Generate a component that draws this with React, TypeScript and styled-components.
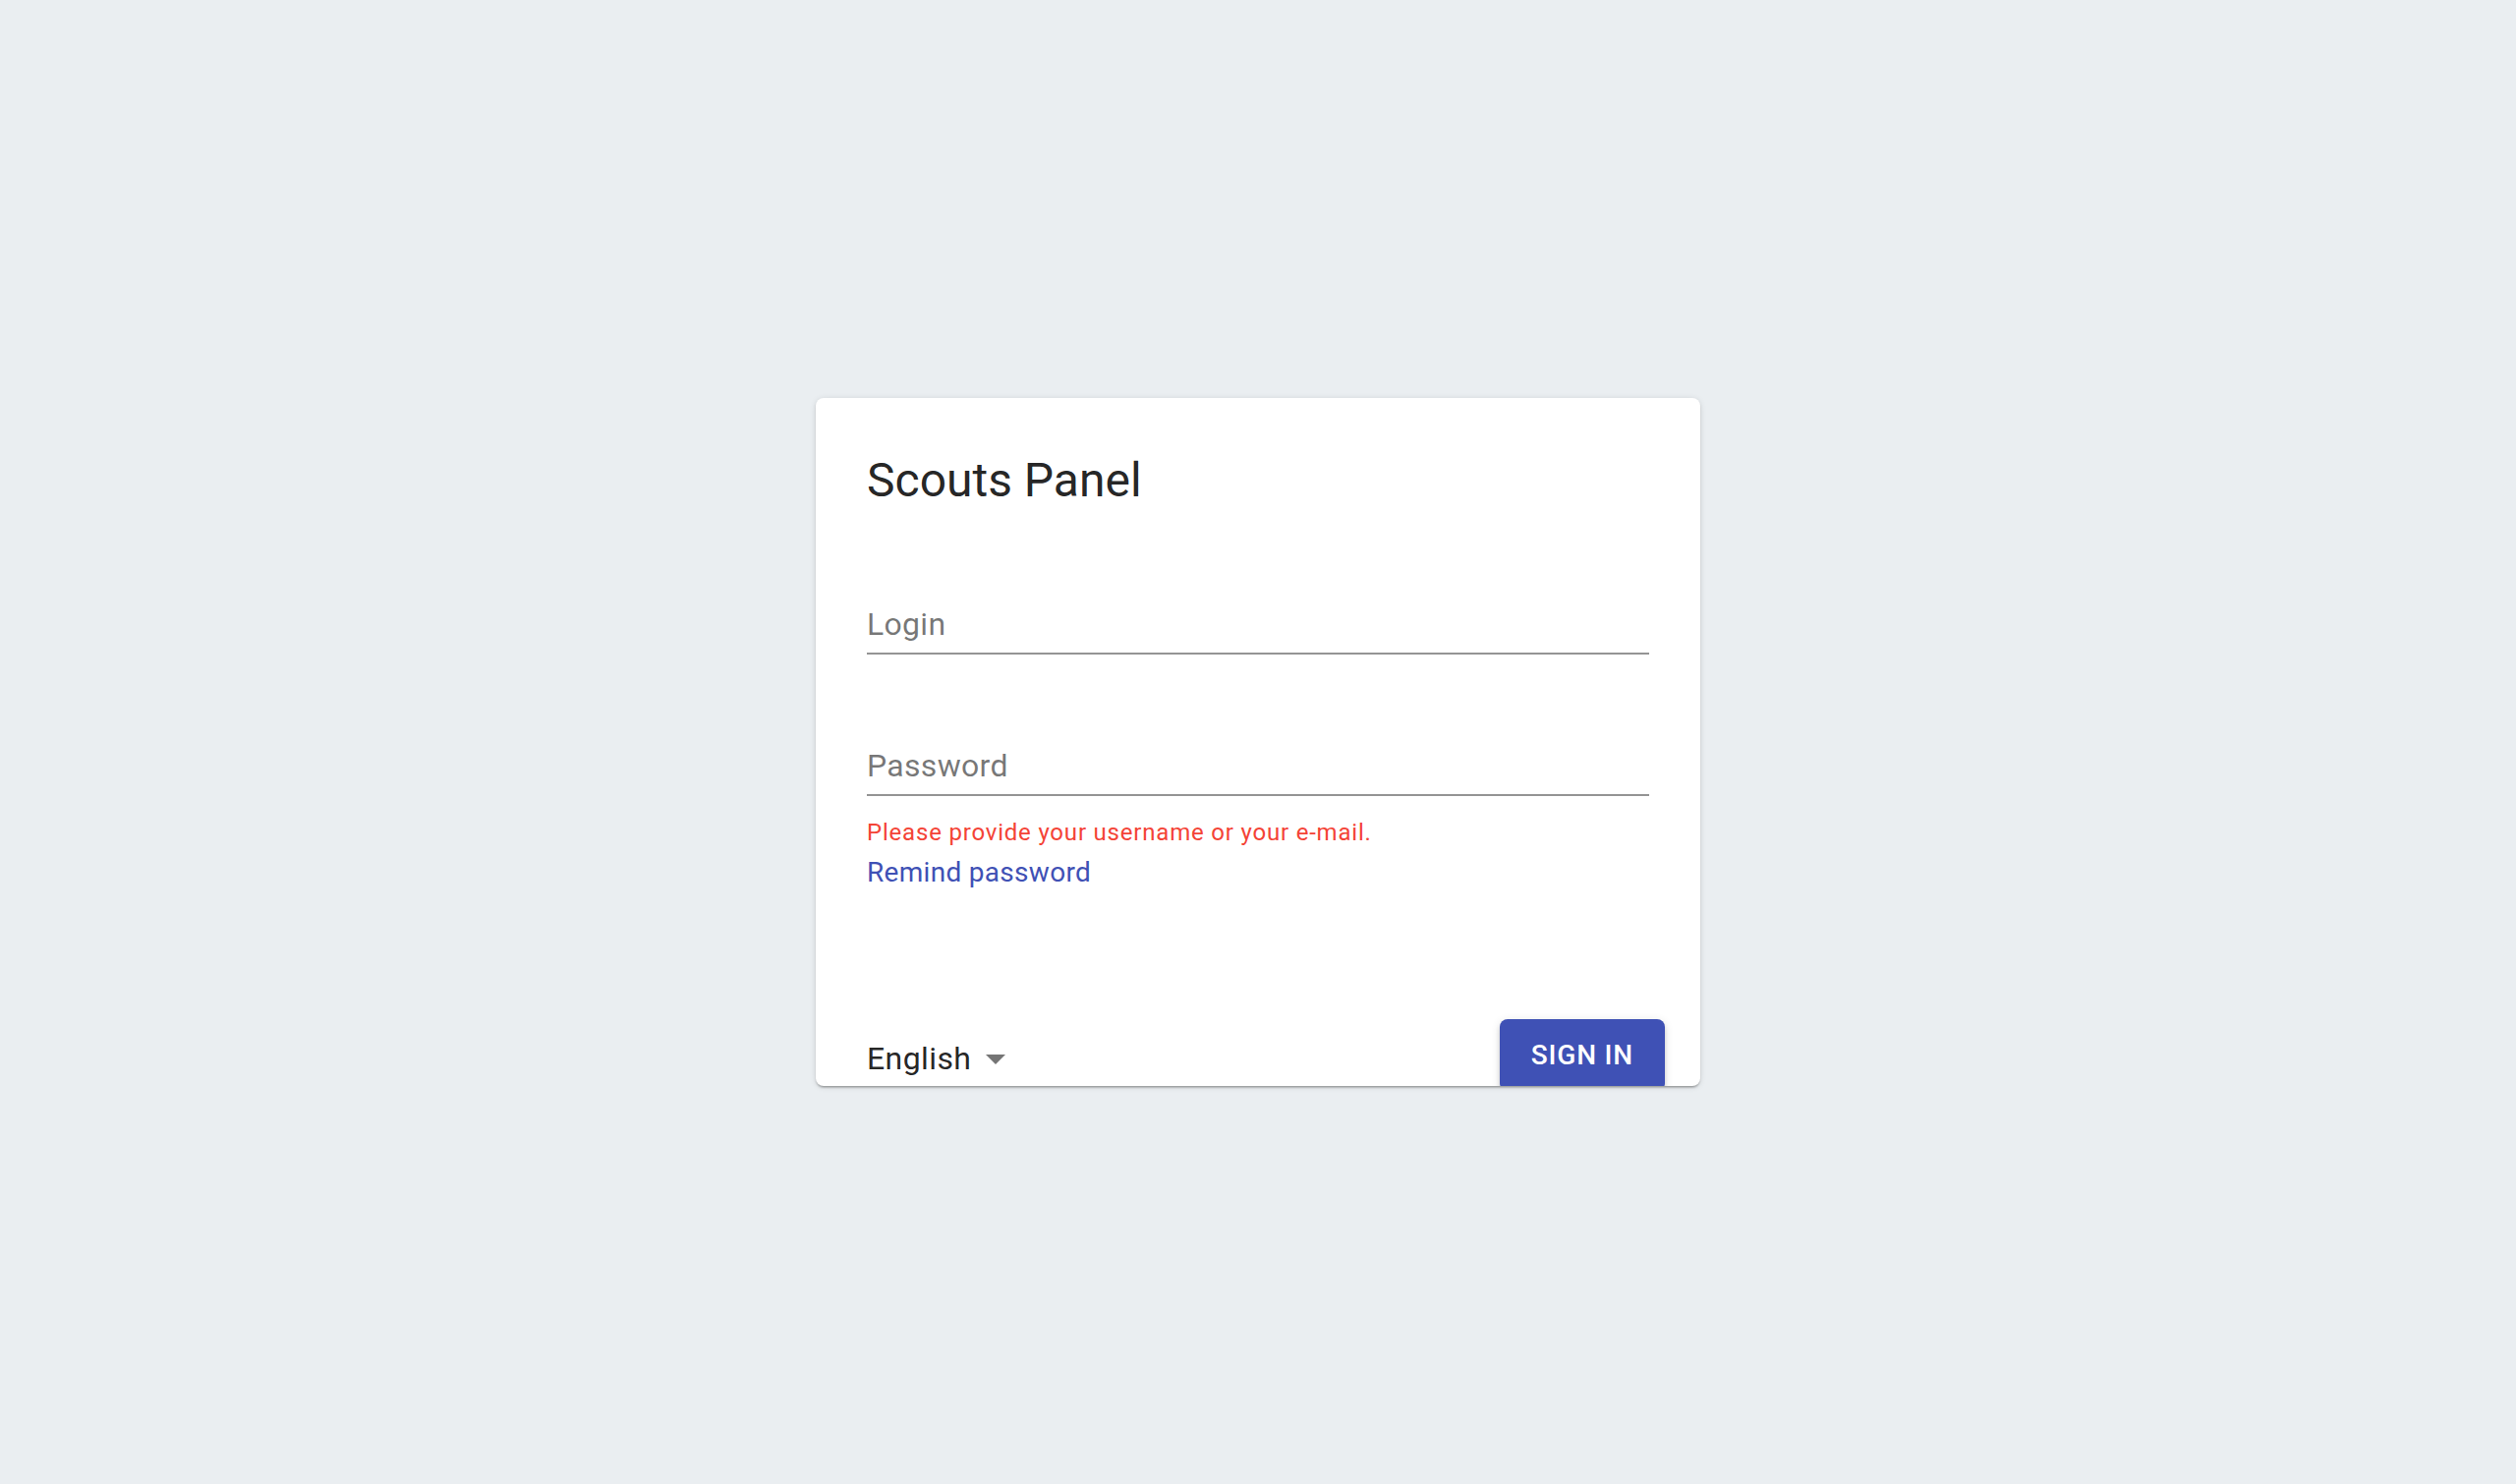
import styled, {createGlobalStyle} from 'styled-components'

const GlobalStyle = createGlobalStyle`
    html, body {
        margin: 0;
        padding: 0;
        background-color: #eaeef1;
        font-family: Roboto, 'Noto Sans', sans-serif;
    }
`
const Page = styled.div`
    height: 100vh;
    display: flex;
    align-items: center;
    justify-content: center;
`
const Card = styled.form`
    box-sizing: border-box;
    width: 900px;
    height: 700px;
    padding: 52px 52px 0;
    background-color: #ffffff;
    border-radius: 8px;
    overflow: hidden;
    display: flex;
    flex-direction: column;
    box-shadow: 0 3px 2px -2px rgba(0, 0, 0, .2), 0 2px 2px 0 rgba(0, 0, 0, .14), 0 1px 6px 0 rgba(0, 0, 0, .12);
`
const Title = styled.h1`
    margin: 0;
    font-size: 48px;
    line-height: 64px;
    font-weight: 400;
    color: rgba(0, 0, 0, .87);
`
const Field = styled.div<{$gap: number}>`
    margin-top: ${p => p.$gap}px;
    border-bottom: 2px solid rgba(0, 0, 0, .42);
`
const Input = styled.input`
    box-sizing: content-box;
    display: block;
    width: 100%;
    height: 38px;
    padding: 8px 0 10px;
    border: none;
    outline: none;
    background: transparent;
    font-family: inherit;
    font-size: 32px;
    line-height: 38px;
    letter-spacing: .3px;
    color: rgba(0, 0, 0, .87);
    &::placeholder {
        color: rgba(0, 0, 0, .54);
        opacity: 1;
    }
`
const Error = styled.p`
    margin: 21px 0 0;
    font-size: 24px;
    line-height: 32px;
    letter-spacing: .8px;
    color: #f44336;
`
const Link = styled.a`
    margin-top: 7px;
    align-self: flex-start;
    font-size: 28px;
    line-height: 36px;
    letter-spacing: .3px;
    color: #3f51b5;
    text-decoration: none;
`
const Footer = styled.div`
    margin: 131px -16px 0 0;
    display: flex;
    justify-content: space-between;
    align-items: flex-start;
`
const Language = styled.div`
    margin-top: 16px;
    display: flex;
    align-items: center;
    font-size: 32px;
    line-height: 38px;
    letter-spacing: .4px;
    color: rgba(0, 0, 0, .87);
    svg {
        margin-left: 1px;
        fill: rgba(0, 0, 0, .54);
    }
`
const Button = styled.button`
    flex-shrink: 0;
    padding: 12px 32px;
    min-width: 128px;
    border: none;
    border-radius: 8px;
    background-color: #3f51b5;
    color: #ffffff;
    font-family: inherit;
    font-size: 28px;
    line-height: 49px;
    font-weight: 500;
    letter-spacing: .8px;
    text-transform: uppercase;
    box-shadow: 0 6px 2px -4px rgba(0, 0, 0, .2), 0 4px 4px 0 rgba(0, 0, 0, .14), 0 2px 10px 0 rgba(0, 0, 0, .12);
`

export default function App() {
    return (
        <Page>
            <GlobalStyle/>
            <Card onSubmit={e => e.preventDefault()}>
                <Title>Scouts Panel</Title>
                <Field $gap={87}>
                    <Input placeholder="Login"/>
                </Field>
                <Field $gap={86}>
                    <Input type="password" placeholder="Password"/>
                </Field>
                <Error>Please provide your username or your e-mail.</Error>
                <Link href="#">Remind password</Link>
                <Footer>
                    <Language>
                        English
                        <svg width="48" height="48" viewBox="0 0 24 24">
                            <path d="M7 10l5 5 5-5z"/>
                        </svg>
                    </Language>
                    <Button type="submit">Sign in</Button>
                </Footer>
            </Card>
        </Page>
    )
}
